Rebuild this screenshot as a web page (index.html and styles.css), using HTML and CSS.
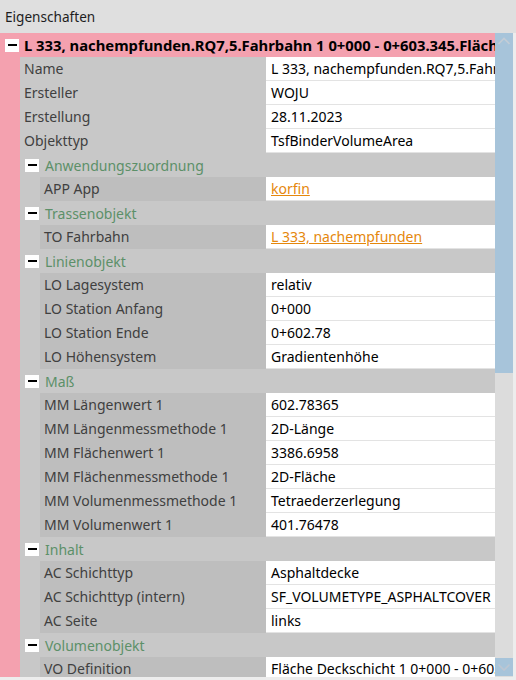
FILE: index.html
```
<!DOCTYPE html>
<html lang="de">
<head>
<meta charset="utf-8">
<title>Eigenschaften</title>
<link rel="stylesheet" href="styles.css">
</head>
<body>
<div class="panel">
  <div class="header">Eigenschaften</div>
  <div class="main">
    <div class="tree">
      <div class="root-title"><span class="minus"></span><span class="title-text">L 333, nachempfunden.RQ7,5.Fahrbahn 1 0+000 - 0+603.345.Fläche Deckschicht</span></div>
      <div class="root-children">
        <div class="row l1"><div class="label">Name</div><div class="value">L 333, nachempfunden.RQ7,5.Fahrbahn 1 0+000 - 0+603.345</div></div>
        <div class="row l1"><div class="label">Ersteller</div><div class="value">WOJU</div></div>
        <div class="row l1"><div class="label">Erstellung</div><div class="value">28.11.2023</div></div>
        <div class="row l1"><div class="label">Objekttyp</div><div class="value">TsfBinderVolumeArea</div></div>

        <div class="group-head"><span class="minus"></span><span class="group-text">Anwendungszuordnung</span></div>
        <div class="group-children">
          <div class="row l2"><div class="label">APP App</div><div class="value"><span class="link">korfin</span></div></div>
        </div>

        <div class="group-head"><span class="minus"></span><span class="group-text">Trassenobjekt</span></div>
        <div class="group-children">
          <div class="row l2"><div class="label">TO Fahrbahn</div><div class="value"><span class="link">L 333, nachempfunden</span></div></div>
        </div>

        <div class="group-head"><span class="minus"></span><span class="group-text">Linienobjekt</span></div>
        <div class="group-children">
          <div class="row l2"><div class="label">LO Lagesystem</div><div class="value">relativ</div></div>
          <div class="row l2"><div class="label">LO Station Anfang</div><div class="value">0+000</div></div>
          <div class="row l2"><div class="label">LO Station Ende</div><div class="value">0+602.78</div></div>
          <div class="row l2"><div class="label">LO Höhensystem</div><div class="value">Gradientenhöhe</div></div>
        </div>

        <div class="group-head"><span class="minus"></span><span class="group-text">Maß</span></div>
        <div class="group-children">
          <div class="row l2"><div class="label">MM Längenwert 1</div><div class="value">602.78365</div></div>
          <div class="row l2"><div class="label">MM Längenmessmethode 1</div><div class="value">2D-Länge</div></div>
          <div class="row l2"><div class="label">MM Flächenwert 1</div><div class="value">3386.6958</div></div>
          <div class="row l2"><div class="label">MM Flächenmessmethode 1</div><div class="value">2D-Fläche</div></div>
          <div class="row l2"><div class="label">MM Volumenmessmethode 1</div><div class="value">Tetraederzerlegung</div></div>
          <div class="row l2"><div class="label">MM Volumenwert 1</div><div class="value">401.76478</div></div>
        </div>

        <div class="group-head"><span class="minus"></span><span class="group-text">Inhalt</span></div>
        <div class="group-children">
          <div class="row l2"><div class="label">AC Schichttyp</div><div class="value">Asphaltdecke</div></div>
          <div class="row l2"><div class="label">AC Schichttyp (intern)</div><div class="value">SF_VOLUMETYPE_ASPHALTCOVER</div></div>
          <div class="row l2"><div class="label">AC Seite</div><div class="value">links</div></div>
        </div>

        <div class="group-head"><span class="minus"></span><span class="group-text">Volumenobjekt</span></div>
        <div class="group-children">
          <div class="row l2"><div class="label">VO Definition</div><div class="value">Fläche Deckschicht 1 0+000 - 0+603.345</div></div>
        </div>
      </div>
    </div>
    <div class="scrollbar">
      <div class="thumb">
        <svg class="chev" width="18" height="18" viewBox="0 0 18 18"><polyline points="3.5,11 9,5.5 14.5,11" fill="none" stroke="#c3ccd6" stroke-width="1.6"/></svg>
      </div>
      <div class="track"></div>
      <div class="btn-down">
        <svg class="chev" width="18" height="18" viewBox="0 0 18 18"><polyline points="3.5,6.5 9,12 14.5,6.5" fill="none" stroke="#bcc6d2" stroke-width="1.6"/></svg>
      </div>
    </div>
  </div>
</div>
</body>
</html>
```
FILE: styles.css
```
html, body {
  margin: 0;
  padding: 0;
}
body {
  font-family: "Noto Sans", "Open Sans", sans-serif;
  font-size: 14px;
  background: #ededed;
}
.panel {
  width: 516px;
  height: 680px;
  background: #ededed;
  display: flex;
  flex-direction: column;
  overflow: hidden;
}
.header {
  height: 33px;
  flex-shrink: 0;
  background: #dfdfdf;
  color: #1e1e1e;
  display: flex;
  align-items: center;
  padding-left: 5px;
  padding-bottom: 1px;
  box-sizing: border-box;
  font-size: 13.6px;
}
.main {
  width: 513px;
  height: 644px;
  display: flex;
  flex-shrink: 0;
}
.tree {
  width: 495px;
  flex-shrink: 0;
  overflow: hidden;
}
.root-title {
  height: 24px;
  background: #f4a1af;
  display: flex;
  align-items: center;
  padding-left: 5px;
  white-space: nowrap;
  overflow: hidden;
}
.title-text {
  font-weight: bold;
  font-size: 14.8px;
  color: #000;
  margin-left: 5px;
}
.minus {
  width: 14px;
  height: 13px;
  background: #fff;
  flex-shrink: 0;
  display: flex;
  align-items: center;
  justify-content: center;
}
.minus::before {
  content: "";
  width: 9px;
  height: 2px;
  background: #000;
}
.root-children {
  padding-left: 20px;
  background: #f4a1af;
}
.group-head {
  height: 24px;
  background: #c8c8c8;
  display: flex;
  align-items: center;
  padding-left: 5px;
}
.group-text {
  color: #5c9068;
  margin-left: 6px;
}
.group-children {
  padding-left: 20px;
  background: #c8c8c8;
}
.row {
  display: flex;
  height: 24px;
}
.label {
  flex: 1;
  min-width: 0;
  padding-left: 4px;
  line-height: 24px;
  white-space: nowrap;
  overflow: hidden;
  color: #404040;
}
.l1 .label {
  background: #c8c8c8;
}
.l2 .label {
  background: #bebebe;
}
.value {
  width: 229px;
  flex-shrink: 0;
  box-sizing: border-box;
  height: 24px;
  background: #fff;
  border-bottom: 1px solid #e3e3e3;
  padding-left: 5px;
  line-height: 23px;
  white-space: nowrap;
  overflow: hidden;
  color: #000;
}
.link {
  color: #e5870c;
  text-decoration: underline;
}
.scrollbar {
  width: 18px;
  flex-shrink: 0;
  display: flex;
  flex-direction: column;
  background: #dcdcdc;
}
.thumb {
  height: 340px;
  background: #a7c4da;
}
.chev {
  display: block;
}
.track {
  flex: 1;
}
.btn-down {
  height: 18px;
  background: #a7c4da;
  margin-bottom: 1px;
}
```
